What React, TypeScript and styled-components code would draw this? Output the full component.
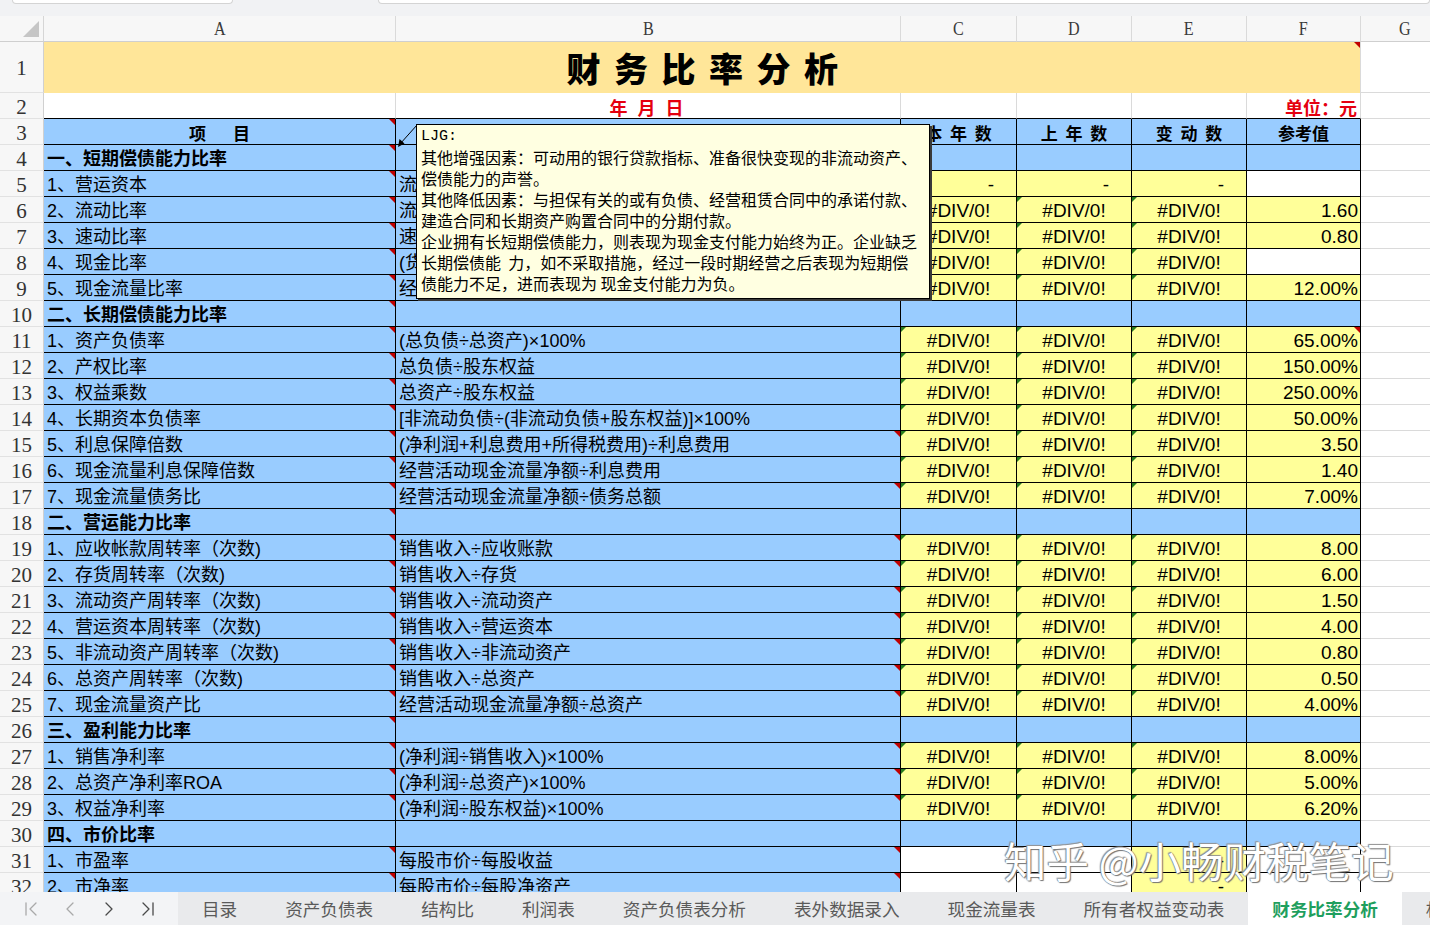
import React from "react";
import styled, { createGlobalStyle, css } from "styled-components";
import { ChevronFirst, ChevronLeft, ChevronRight, ChevronLast } from "lucide-react";

const CJK = `"Noto Sans CJK SC", "Noto Sans", sans-serif`;
const CELL_FONT = `"Liberation Sans", "Noto Sans CJK SC", sans-serif`;
const COLS = "44px 352px 505px 116px 115px 115px 114px 89px";
const BLUE = "#99ccff";
const YELLOW = "#ffff99";
const RED_TEXT = "#e5000f";

type RowData =
  | { n: number; kind: "section"; a: string; noMark?: boolean }
  | {
      n: number;
      kind: "item";
      a: string;
      b: string;
      v: "div" | "dash" | "market";
      f: string;
      fy: boolean;
      bMark?: boolean;
      fMark?: boolean;
    };

const rows: RowData[] = [
  { n: 4, kind: "section", a: "一、短期偿债能力比率" },
  { n: 5, kind: "item", a: "1、营运资本", b: "流动资产-流动负债", v: "dash", f: "", fy: false },
  { n: 6, kind: "item", a: "2、流动比率", b: "流动资产÷流动负债", v: "div", f: "1.60", fy: true },
  { n: 7, kind: "item", a: "3、速动比率", b: "速动资产÷流动负债", v: "div", f: "0.80", fy: true },
  { n: 8, kind: "item", a: "4、现金比率", b: "(货币资金+交易性金融资产)÷流动负债", v: "div", f: "", fy: false },
  { n: 9, kind: "item", a: "5、现金流量比率", b: "经营活动现金流量净额÷流动负债", v: "div", f: "12.00%", fy: true },
  { n: 10, kind: "section", a: "二、长期偿债能力比率" },
  { n: 11, kind: "item", a: "1、资产负债率", b: "(总负债÷总资产)×100%", v: "div", f: "65.00%", fy: true, fMark: true },
  { n: 12, kind: "item", a: "2、产权比率", b: "总负债÷股东权益", v: "div", f: "150.00%", fy: true },
  { n: 13, kind: "item", a: "3、权益乘数", b: "总资产÷股东权益", v: "div", f: "250.00%", fy: true },
  { n: 14, kind: "item", a: "4、长期资本负债率", b: "[非流动负债÷(非流动负债+股东权益)]×100%", v: "div", f: "50.00%", fy: true },
  { n: 15, kind: "item", a: "5、利息保障倍数", b: "(净利润+利息费用+所得税费用)÷利息费用", v: "div", f: "3.50", fy: true, bMark: true },
  { n: 16, kind: "item", a: "6、现金流量利息保障倍数", b: "经营活动现金流量净额÷利息费用", v: "div", f: "1.40", fy: true },
  { n: 17, kind: "item", a: "7、现金流量债务比", b: "经营活动现金流量净额÷债务总额", v: "div", f: "7.00%", fy: true, bMark: true },
  { n: 18, kind: "section", a: "二、营运能力比率" },
  { n: 19, kind: "item", a: "1、应收帐款周转率（次数)", b: "销售收入÷应收账款", v: "div", f: "8.00", fy: true, bMark: true },
  { n: 20, kind: "item", a: "2、存货周转率（次数)", b: "销售收入÷存货", v: "div", f: "6.00", fy: true, bMark: true },
  { n: 21, kind: "item", a: "3、流动资产周转率（次数)", b: "销售收入÷流动资产", v: "div", f: "1.50", fy: true, bMark: true },
  { n: 22, kind: "item", a: "4、营运资本周转率（次数)", b: "销售收入÷营运资本", v: "div", f: "4.00", fy: true, bMark: true },
  { n: 23, kind: "item", a: "5、非流动资产周转率（次数)", b: "销售收入÷非流动资产", v: "div", f: "0.80", fy: true, bMark: true },
  { n: 24, kind: "item", a: "6、总资产周转率（次数)", b: "销售收入÷总资产", v: "div", f: "0.50", fy: true, bMark: true },
  { n: 25, kind: "item", a: "7、现金流量资产比", b: "经营活动现金流量净额÷总资产", v: "div", f: "4.00%", fy: true, bMark: true },
  { n: 26, kind: "section", a: "三、盈利能力比率" },
  { n: 27, kind: "item", a: "1、销售净利率", b: "(净利润÷销售收入)×100%", v: "div", f: "8.00%", fy: true, bMark: true },
  { n: 28, kind: "item", a: "2、总资产净利率ROA", b: "(净利润÷总资产)×100%", v: "div", f: "5.00%", fy: true, bMark: true },
  { n: 29, kind: "item", a: "3、权益净利率", b: "(净利润÷股东权益)×100%", v: "div", f: "6.20%", fy: true, bMark: true },
  { n: 30, kind: "section", a: "四、市价比率", noMark: true },
  { n: 31, kind: "item", a: "1、市盈率", b: "每股市价÷每股收益", v: "market", f: "", fy: false, bMark: true },
  { n: 32, kind: "item", a: "2、市净率", b: "每股市价÷每股净资产", v: "market", f: "", fy: false, bMark: true },
];

const tabs = [
  "目录",
  "资产负债表",
  "结构比",
  "利润表",
  "资产负债表分析",
  "表外数据录入",
  "现金流量表",
  "所有者权益变动表",
  "财务比率分析",
  "杜邦分析",
];

const commentText = `其他增强因素：可动用的银行贷款指标、准备很快变现的非流动资产、
偿债能力的声誉。
其他降低因素：与担保有关的或有负债、经营租赁合同中的承诺付款、
建造合同和长期资产购置合同中的分期付款。
企业拥有长短期偿债能力，则表现为现金支付能力始终为正。企业缺乏
长期偿债能  力，如不采取措施，经过一段时期经营之后表现为短期偿
债能力不足，进而表现为 现金支付能力为负。`;

export default function App() {
  return (
    <Page>
      <GlobalStyle />
      <TopBar>
        <FormulaBox $w={223} $ml={12} />
        <FormulaBox $w={1060} $ml={145} />
      </TopBar>
      <Sheet>
        <HeaderRow>
          <Corner>
            <svg width="16" height="16" viewBox="0 0 16 16">
              <polygon points="16,0 16,16 0,16" fill="#c6c6c6" />
            </svg>
          </Corner>
          {["A", "B", "C", "D", "E", "F", "G"].map((l) => (
            <ColHead key={l}>
              <Letter>{l}</Letter>
            </ColHead>
          ))}
        </HeaderRow>

        <GridRow $h={51}>
          <RowHead>1</RowHead>
          <TitleCell>财务比率分析</TitleCell>
          <Cell />
        </GridRow>

        <GridRow $h={26}>
          <RowHead>2</RowHead>
          <Cell $bottom="#000" />
          <Cell $bottom="#000" $justify="center">
            <RedText $spacing={3}>年 月 日</RedText>
          </Cell>
          <Cell $bottom="#000" />
          <Cell $bottom="#000" />
          <Cell $bottom="#000" />
          <Cell $bottom="#000" $justify="flex-end" $pr={3}>
            <RedText>单位：元</RedText>
          </Cell>
          <Cell />
        </GridRow>

        <GridRow $h={26}>
          <RowHead>3</RowHead>
          <Cell $table $bg={BLUE} $justify="center" $red>
            <HeadText $spacing={5}>项　目</HeadText>
          </Cell>
          <Cell $table $bg={BLUE} $justify="center">
            <HeadText $spacing={4}>计算公式</HeadText>
          </Cell>
          <Cell $table $bg={BLUE} $justify="center">
            <HeadText $spacing={2}>本 年 数</HeadText>
          </Cell>
          <Cell $table $bg={BLUE} $justify="center">
            <HeadText $spacing={2}>上 年 数</HeadText>
          </Cell>
          <Cell $table $bg={BLUE} $justify="center">
            <HeadText $spacing={2}>变 动 数</HeadText>
          </Cell>
          <Cell $table $bg={BLUE} $justify="center">
            <HeadText>参考值</HeadText>
          </Cell>
          <Cell />
        </GridRow>

        {rows.map((r) => (
          <DataRow key={r.n} r={r} />
        ))}
      </Sheet>

      <TabBar>
        <NavGroup>
          <NavBtn $dim>
            <ChevronFirst size={24} strokeWidth={1.3} />
          </NavBtn>
          <NavBtn $dim>
            <ChevronLeft size={24} strokeWidth={1.3} />
          </NavBtn>
          <NavBtn>
            <ChevronRight size={24} strokeWidth={1.3} />
          </NavBtn>
          <NavBtn>
            <ChevronLast size={24} strokeWidth={1.3} />
          </NavBtn>
        </NavGroup>
        {tabs.map((t) => (
          <Tab key={t} $active={t === "财务比率分析"}>
            {t}
          </Tab>
        ))}
      </TabBar>

      <Arrow width="24" height="26" viewBox="0 0 24 26">
        <line x1="21" y1="2" x2="4" y2="21" stroke="#000" strokeWidth="1" />
        <polygon points="2,24 3.5,16 8.5,20.5" fill="#000" />
      </Arrow>
      <Comment>
        <CommentAuthor>LJG:</CommentAuthor>
        {commentText}
      </Comment>
      <Watermark>知乎 @小畅财税笔记</Watermark>
    </Page>
  );
}

function DataRow({ r }: { r: RowData }) {
  if (r.kind === "section") {
    return (
      <GridRow $h={26}>
        <RowHead>{r.n}</RowHead>
        <Cell $table $bg={BLUE} $red={!r.noMark} $bold>
          {r.a}
        </Cell>
        <Cell $table $bg={BLUE} />
        <Cell $table $bg={BLUE} />
        <Cell $table $bg={BLUE} />
        <Cell $table $bg={BLUE} />
        <Cell $table $bg={BLUE} />
        <Cell />
      </GridRow>
    );
  }

  const value = (col: number) => {
    if (r.v === "div") {
      return (
        <Cell $table $bg={YELLOW} $justify="center" $green $num>
          #DIV/0!
        </Cell>
      );
    }
    if (r.v === "dash") {
      return (
        <Cell $table $bg={YELLOW} $justify="flex-end" $pr={22} $num>
          -
        </Cell>
      );
    }
    // market rows: only the change column carries a value
    return col === 2 ? (
      <Cell $table $bg={YELLOW} $justify="flex-end" $pr={22} $num>
        -
      </Cell>
    ) : (
      <Cell $table $bg="#fff" />
    );
  };

  return (
    <GridRow $h={26}>
      <RowHead>{r.n}</RowHead>
      <Cell $table $bg={BLUE} $red>
        {r.a}
      </Cell>
      <Cell $table $bg={BLUE} $red={r.bMark}>
        {r.b}
      </Cell>
      {value(0)}
      {value(1)}
      {value(2)}
      <Cell $table $bg={r.fy ? YELLOW : "#fff"} $justify="flex-end" $pr={2} $num $red={r.fMark}>
        {r.f}
      </Cell>
      <Cell />
    </GridRow>
  );
}

const GlobalStyle = createGlobalStyle`
  html, body { margin: 0; padding: 0; background: #fff; }
  body { font-family: ${CJK}; overflow: hidden; }
`;

const Page = styled.div`
  position: relative;
  width: 1430px;
  height: 925px;
  display: flex;
  flex-direction: column;
  overflow: hidden;
  background: #fff;
`;

const TopBar = styled.div`
  height: 16px;
  flex-shrink: 0;
  display: flex;
  align-items: flex-start;
  background: #f1f2f4;
`;

const FormulaBox = styled.div<{ $w: number; $ml: number }>`
  width: ${(p) => p.$w}px;
  margin-left: ${(p) => p.$ml}px;
  height: 4px;
  box-sizing: border-box;
  background: #fff;
  border: 1px solid #d4d4d4;
  border-top: none;
  border-radius: 0 0 4px 4px;
`;

const Sheet = styled.div`
  flex: 1;
  min-height: 0;
  overflow: hidden;
  display: flex;
  flex-direction: column;
`;

const HeaderRow = styled.div`
  display: grid;
  grid-template-columns: ${COLS};
  grid-template-rows: 26px;
  height: 26px;
  flex-shrink: 0;
  background: #f7f7f7;
`;

const Corner = styled.div`
  box-sizing: border-box;
  display: flex;
  align-items: flex-end;
  justify-content: flex-end;
  padding: 0 4px 4px 0;
  border-right: 1px solid #d6d6d6;
  border-bottom: 1px solid #cfcfcf;
`;

const ColHead = styled.div`
  box-sizing: border-box;
  display: flex;
  align-items: center;
  justify-content: center;
  border-right: 1px solid #dadada;
  border-bottom: 1px solid #cfcfcf;
  font-family: "Liberation Serif", serif;
  font-size: 19px;
  line-height: 22px;
  color: #3a3a3a;
`;

const Letter = styled.span`
  display: inline-block;
  transform: scaleX(0.85);
`;

const GridRow = styled.div<{ $h: number }>`
  display: grid;
  grid-template-columns: ${COLS};
  grid-template-rows: ${(p) => p.$h}px;
  height: ${(p) => p.$h}px;
  flex-shrink: 0;
`;

const RowHead = styled.div`
  box-sizing: border-box;
  display: flex;
  align-items: center;
  justify-content: center;
  background: #f7f7f7;
  border-right: 1px solid #d0d0d0;
  border-bottom: 1px solid #e2e2e2;
  font-family: "Liberation Serif", serif;
  font-size: 21px;
  line-height: 22px;
  color: #333;
  padding-top: 2px;
  overflow: hidden;
`;

type CellProps = {
  $bg?: string;
  $table?: boolean;
  $bottom?: string;
  $justify?: "flex-start" | "center" | "flex-end";
  $bold?: boolean;
  $red?: boolean;
  $green?: boolean;
  $num?: boolean;
  $pr?: number;
};

const Cell = styled.div<CellProps>`
  position: relative;
  box-sizing: border-box;
  min-height: 0;
  display: flex;
  align-items: center;
  justify-content: ${(p) => p.$justify ?? "flex-start"};
  padding: 2px ${(p) => p.$pr ?? 3}px 0 3px;
  background: ${(p) => p.$bg ?? "#fff"};
  border-right: 1px solid ${(p) => (p.$table ? "#000" : "#dadada")};
  border-bottom: 1px solid ${(p) => p.$bottom ?? (p.$table ? "#000" : "#dadada")};
  font-family: ${CELL_FONT};
  font-size: ${(p) => (p.$num ? 19 : 18)}px;
  line-height: 22px;
  font-weight: ${(p) => (p.$bold ? 700 : 400)};
  color: #000;
  white-space: nowrap;
  overflow: hidden;

  ${(p) =>
    p.$red &&
    css`
      &::after {
        content: "";
        position: absolute;
        top: 0;
        right: 0;
        border-style: solid;
        border-width: 0 6px 6px 0;
        border-color: transparent #c00000 transparent transparent;
      }
    `}

  ${(p) =>
    p.$green &&
    css`
      &::before {
        content: "";
        position: absolute;
        top: 0;
        left: 0;
        border-style: solid;
        border-width: 5px 5px 0 0;
        border-color: #2a7d1f transparent transparent transparent;
      }
    `}
`;

const TitleCell = styled.div`
  position: relative;
  grid-column: span 6;
  box-sizing: border-box;
  display: flex;
  align-items: center;
  justify-content: center;
  padding-left: 14px;
  background: #ffe699;
  border-right: 1px solid #dadada;
  font-family: ${CJK};
  font-size: 34px;
  line-height: 40px;
  font-weight: 900;
  letter-spacing: 13.5px;
  color: #000;

  &::after {
    content: "";
    position: absolute;
    top: 0;
    right: 0;
    border-style: solid;
    border-width: 0 6px 6px 0;
    border-color: transparent #c00000 transparent transparent;
  }
`;

const RedText = styled.span<{ $spacing?: number }>`
  font-family: ${CJK};
  font-size: 18px;
  font-weight: 700;
  color: ${RED_TEXT};
  letter-spacing: ${(p) => p.$spacing ?? 0}px;
`;

const HeadText = styled.span<{ $spacing?: number }>`
  font-family: ${CJK};
  font-size: 17px;
  font-weight: 700;
  letter-spacing: ${(p) => p.$spacing ?? 0}px;
  margin-right: -${(p) => p.$spacing ?? 0}px;
`;

const TabBar = styled.div`
  height: 33px;
  flex-shrink: 0;
  display: flex;
  align-items: stretch;
  background: #e9eaec;
  overflow: hidden;
  white-space: nowrap;
`;

const NavGroup = styled.div`
  width: 178px;
  flex-shrink: 0;
  display: flex;
  align-items: center;
  padding-left: 11px;
  box-sizing: border-box;
  background: #f3f4f6;
`;

const NavBtn = styled.div<{ $dim?: boolean }>`
  width: 39px;
  display: flex;
  align-items: center;
  justify-content: center;
  color: ${(p) => (p.$dim ? "#a9a9a9" : "#4a4a4a")};
`;

const Tab = styled.div<{ $active?: boolean }>`
  flex-shrink: 0;
  display: flex;
  align-items: center;
  padding: 0 24px;
  font-family: ${CJK};
  font-size: 17.6px;
  color: ${(p) => (p.$active ? "#1f9f5e" : "#5a5a5a")};
  font-weight: ${(p) => (p.$active ? 700 : 400)};
  background: ${(p) => (p.$active ? "#fff" : "transparent")};
`;

const Arrow = styled.svg`
  position: absolute;
  left: 396px;
  top: 123px;
`;

const Comment = styled.div`
  position: absolute;
  left: 416px;
  top: 124px;
  width: 514px;
  height: 175px;
  box-sizing: border-box;
  padding: 1px 4px 0 4px;
  background: #ffffe1;
  border: 1px solid #000;
  box-shadow: 2px 2px 0 #3a3a3a;
  font-family: ${CJK};
  font-size: 16px;
  line-height: 21px;
  color: #000;
  white-space: pre;
  overflow: hidden;
`;

const CommentAuthor = styled.div`
  font-family: "Liberation Mono", monospace;
  font-size: 15px;
`;

const Watermark = styled.div`
  position: absolute;
  left: 1004px;
  top: 836px;
  font-family: ${CJK};
  font-size: 42.5px;
  line-height: 48px;
  color: #fff;
  white-space: pre;
  text-shadow: 0 0 1px #555, 1px 1px 1px #777, -1px -1px 1px #999;
  pointer-events: none;
`;
